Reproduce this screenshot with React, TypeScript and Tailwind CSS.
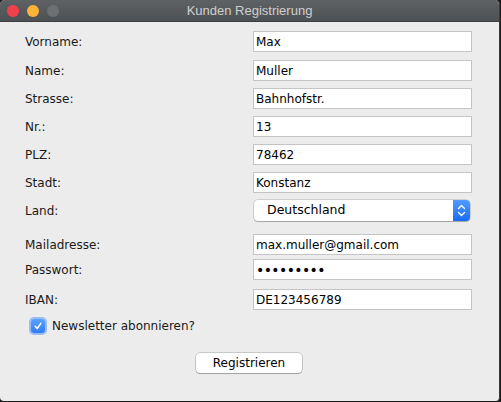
import React from "react";

const font = { fontFamily: '"DejaVu Sans", "Liberation Sans", sans-serif' };

function Row({ label, value, top, password }: { label: string; value: string; top: string; password?: boolean }) {
  return (
    <div className={`flex items-center h-[21px] ${top}`}>
      <div className="w-[228px] text-[12px] text-[#1a1a1a]">{label}</div>
      <div className="w-[219px] h-[21px] bg-white border border-[#c4c4c4] flex items-center pl-[2px] text-[12px] text-black">
        {password ? <span className="tracking-[-0.6px] text-[14px] leading-none">•••••••••</span> : value}
      </div>
    </div>
  );
}

export default function App() {
  return (
    <div className="w-[501px] h-[402px] bg-[#1c1c1c] overflow-hidden" style={font}>
      <div className="w-[500px] h-[401px] bg-[#ececec] rounded-t-[5px] rounded-b-[4px] overflow-hidden flex flex-col border-r border-[#3a3a3a]">
        <div className="h-[22px] bg-gradient-to-b from-[#5f6264] to-[#4e5153] flex items-center relative border-b border-[#3c3e40]">
          <div className="flex items-center gap-[8px] pl-[7px]">
            <div className="w-[12px] h-[12px] rounded-full bg-[#f2404b]" />
            <div className="w-[12px] h-[12px] rounded-full bg-[#fcb33a]" />
            <div className="w-[12px] h-[12px] rounded-full bg-[#6d6f71]" />
          </div>
          <div className="absolute inset-0 flex items-center justify-center text-[13px] text-[#cfcfcf]" style={{ fontFamily: '"Liberation Sans", "DejaVu Sans", sans-serif' }}>
            Kunden Registrierung
          </div>
        </div>
        <div className="pl-[25px] flex flex-col">
          <Row label="Vorname:" value="Max" top="mt-[9px]" />
          <Row label="Name:" value="Muller" top="mt-[8px]" />
          <Row label="Strasse:" value="Bahnhofstr." top="mt-[7px]" />
          <Row label="Nr.:" value="13" top="mt-[7px]" />
          <Row label="PLZ:" value="78462" top="mt-[7px]" />
          <Row label="Stadt:" value="Konstanz" top="mt-[7px]" />
          <div className="flex items-center h-[21px] mt-[7px]">
            <div className="w-[229px] text-[12px] text-[#1a1a1a]">Land:</div>
            <div className="w-[216px] h-[21px] bg-white rounded-[4px] flex items-center shadow-[0_0_0_0.5px_rgba(0,0,0,0.25),0_1px_1px_rgba(0,0,0,0.2)]">
              <div className="flex-1 pl-[13px] text-[12.5px] text-black">Deutschland</div>
              <div className="w-[17px] h-[21px] rounded-r-[4px] bg-gradient-to-b from-[#4f9bff] to-[#1a6bf5] flex items-center justify-center">
                <svg width="9" height="13" viewBox="0 0 9 13" fill="none" stroke="white" strokeWidth="1.4" strokeLinecap="round" strokeLinejoin="round">
                  <path d="M1.5 4.5 L4.5 1.5 L7.5 4.5" />
                  <path d="M1.5 8.5 L4.5 11.5 L7.5 8.5" />
                </svg>
              </div>
            </div>
          </div>
          <Row label="Mailadresse:" value="max.muller@gmail.com" top="mt-[13px]" />
          <Row label="Passwort:" value="" password top="mt-[4px]" />
          <Row label="IBAN:" value="DE123456789" top="mt-[9px]" />
          <div className="flex items-center mt-[8px] ml-[6px] h-[16px]">
            <div className="w-[14px] h-[14px] rounded-[3px] bg-gradient-to-b from-[#5aa2ff] to-[#2f7cf6] flex items-center justify-center shadow-[0_0_0_2px_rgba(90,150,245,0.55)]">
              <svg width="10" height="10" viewBox="0 0 10 10" fill="none" stroke="white" strokeWidth="1.6" strokeLinecap="round" strokeLinejoin="round">
                <path d="M2.2 5.3 L4.2 7.6 L7.8 2.4" />
              </svg>
            </div>
            <span className="ml-[7px] text-[12px] text-[#1a1a1a]">Newsletter abonnieren?</span>
          </div>
          <div className="flex justify-start mt-[19px] ml-[171px]">
            <div className="w-[106px] h-[20px] bg-white rounded-[4px] flex items-center justify-center text-[12px] text-black shadow-[0_0_0_0.5px_rgba(0,0,0,0.3),0_1px_1px_rgba(0,0,0,0.2)]">
              Registrieren
            </div>
          </div>
        </div>
      </div>
    </div>
  );
}
